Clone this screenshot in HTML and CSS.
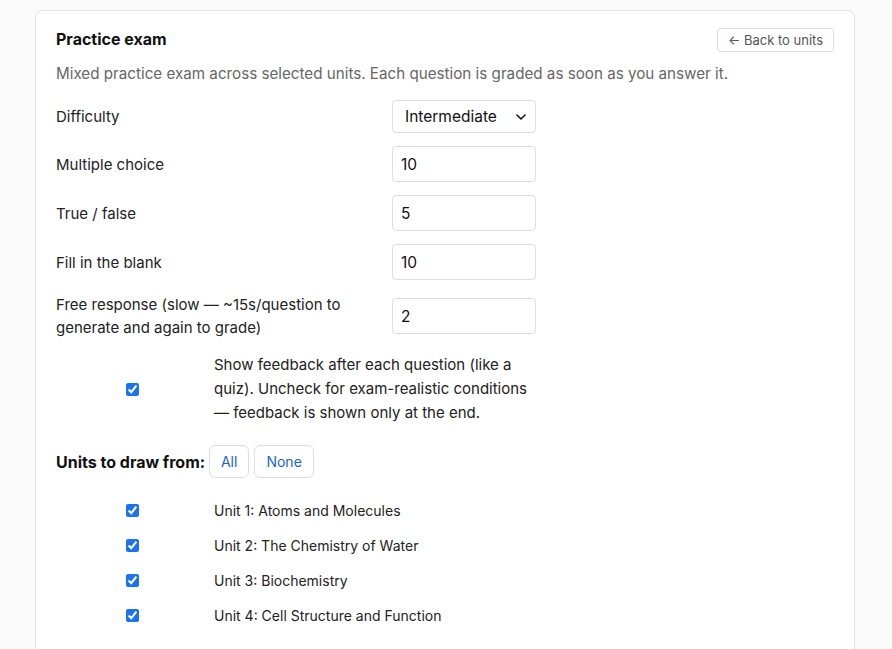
FILE: index.html
```html
<!DOCTYPE html>
<html lang="en">
<head>
<meta charset="utf-8">
<title>Practice exam</title>
<link rel="stylesheet" href="styles.css">
</head>
<body>
<div class="page">
  <section class="card">
    <header class="card-head">
      <h2 class="title">Practice exam</h2>
      <button class="back-btn" type="button">← Back to units</button>
    </header>
    <p class="desc">Mixed practice exam across selected units. Each question is graded as soon as you answer it.</p>

    <div class="form-grid">
      <label class="field-label" for="diff">Difficulty</label>
      <div class="select-wrap">
        <select id="diff" class="select">
          <option>Intermediate</option>
        </select>
        <svg class="chev" width="10" height="6" viewBox="0 0 10 6"><path d="M1 1l4 4 4-4" fill="none" stroke="#111" stroke-width="1.6" stroke-linecap="round" stroke-linejoin="round"/></svg>
      </div>

      <label class="field-label" for="mc">Multiple choice</label>
      <input id="mc" class="num" type="text" value="10">

      <label class="field-label" for="tf">True / false</label>
      <input id="tf" class="num" type="text" value="5">

      <label class="field-label" for="fb">Fill in the blank</label>
      <input id="fb" class="num" type="text" value="10">

      <label class="field-label" for="fr">Free response (slow — ~15s/question to generate and again to grade)</label>
      <input id="fr" class="num" type="text" value="2">
    </div>

    <label class="check-row feedback">
      <span class="check-cell"><input type="checkbox" checked></span>
      <span class="check-text">Show feedback after each question (like a quiz). Uncheck for exam-realistic conditions — feedback is shown only at the end.</span>
    </label>

    <div class="units-head">
      <strong class="units-label">Units to draw from:</strong>
      <button class="link-btn all" type="button">All</button>
      <button class="link-btn none" type="button">None</button>
    </div>

    <ul class="unit-list">
      <li><label class="check-row unit"><span class="check-cell"><input type="checkbox" checked></span><span class="unit-text">Unit 1: Atoms and Molecules</span></label></li>
      <li><label class="check-row unit"><span class="check-cell"><input type="checkbox" checked></span><span class="unit-text">Unit 2: The Chemistry of Water</span></label></li>
      <li><label class="check-row unit"><span class="check-cell"><input type="checkbox" checked></span><span class="unit-text">Unit 3: Biochemistry</span></label></li>
      <li><label class="check-row unit"><span class="check-cell"><input type="checkbox" checked></span><span class="unit-text">Unit 4: Cell Structure and Function</span></label></li>
    </ul>
  </section>
</div>
</body>
</html>
```

FILE: styles.css
```css
* { box-sizing: border-box; }

html, body {
  margin: 0;
  padding: 0;
  background: #fafafa;
  font-family: Inter, "Liberation Sans", Arial, sans-serif;
  color: #222;
}

.page {
  padding: 10px 37px 0 35px;
}

.card {
  background: #fff;
  border: 1px solid #e3e3e3;
  border-radius: 8px;
  padding: 17px 20px 40px;
}

.card-head {
  display: flex;
  justify-content: space-between;
  align-items: center;
  height: 24px;
}

.title {
  margin: 0;
  font-size: 16px;
  line-height: 20px;
  font-weight: 700;
  color: #111;
  position: relative;
  top: -1px;
}

.back-btn {
  height: 24px;
  width: 117px;
  padding: 0;
  border: 1px solid #dedede;
  border-radius: 4px;
  background: #fff;
  color: #555;
  font-family: inherit;
  font-size: 13px;
}

.desc {
  margin: 11px 0 0;
  font-size: 15.2px;
  line-height: 22px;
  color: #666;
}

.form-grid {
  display: grid;
  grid-template-columns: 320px 144px;
  column-gap: 16px;
  row-gap: 13px;
  align-items: center;
  margin-top: 15px;
}

.field-label {
  font-size: 15px;
  line-height: 23px;
  color: #222;
}

.select-wrap {
  position: relative;
  width: 144px;
  height: 33px;
}

.select {
  appearance: none;
  -webkit-appearance: none;
  width: 100%;
  height: 100%;
  border: 1px solid #dedede;
  border-radius: 4px;
  background: #fff;
  padding: 0 0 0 12px;
  font-family: inherit;
  font-size: 15.5px;
  color: #111;
}

.chev {
  position: absolute;
  right: 10px;
  top: 14px;
  pointer-events: none;
}

.num {
  width: 144px;
  height: 36px;
  border: 1px solid #dedede;
  border-radius: 4px;
  padding: 0 8px;
  font-family: inherit;
  font-size: 15.5px;
  color: #111;
  background: #fff;
}

.check-row {
  display: flex;
  align-items: center;
  column-gap: 6px;
}

.check-cell {
  width: 152px;
  display: flex;
  justify-content: center;
  flex: none;
}

.check-cell input {
  margin: 0;
  width: 13px;
  height: 13px;
  accent-color: #1a73f0;
}

.feedback {
  margin-top: 14px;
}

.check-text {
  width: 322px;
  font-size: 15px;
  line-height: 24px;
  color: #222;
}

.units-head {
  display: flex;
  align-items: center;
  margin-top: 20px;
}

.units-label {
  font-size: 16px;
  font-weight: 700;
  color: #111;
  margin-right: 4px;
}

.link-btn {
  height: 33px;
  border: 1px solid #dedede;
  border-radius: 6px;
  background: #fff;
  color: #1a66c2;
  font-family: inherit;
  font-size: 14px;
  padding: 0;
}

.link-btn.all { width: 40px; }
.link-btn.none { width: 60px; margin-left: 5px; }

.unit-list {
  list-style: none;
  margin: 15px 0 0;
  padding: 0;
}

.unit-list li {
  height: 35px;
  display: flex;
  align-items: center;
}

.unit-text {
  font-size: 14px;
  color: #222;
}
```
